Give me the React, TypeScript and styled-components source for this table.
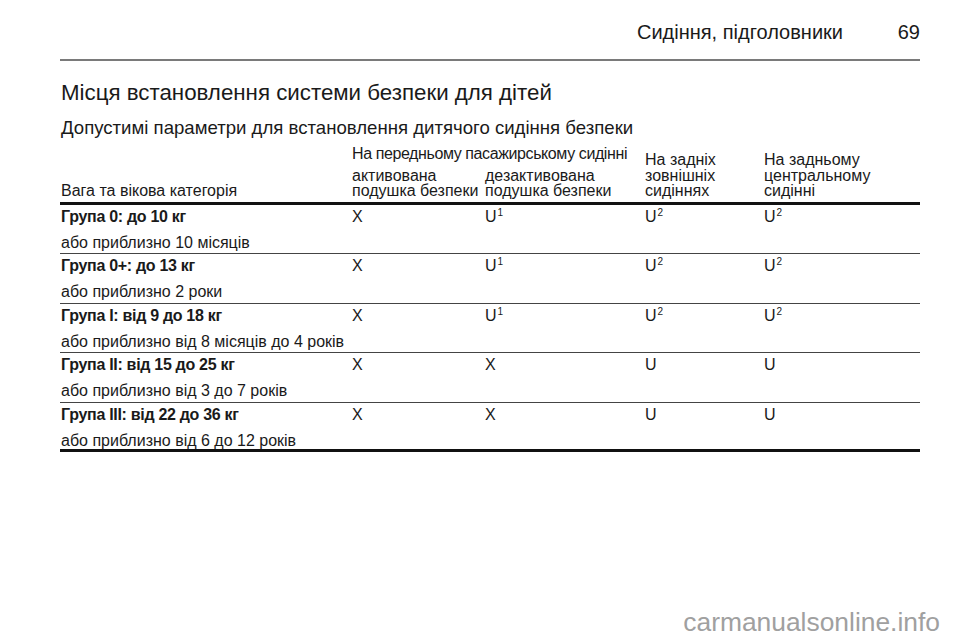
import styled, { createGlobalStyle } from 'styled-components';

const GlobalStyle = createGlobalStyle`
  html, body {
    margin: 0;
    padding: 0;
    background: #ffffff;
  }
  body {
    font-family: "Liberation Sans", Arial, sans-serif;
    color: #1a1a1a;
  }
`;

const Page = styled.div`
  width: 960px;
  height: 642px;
  box-sizing: border-box;
  padding: 0 40px 0 60px;
  position: relative;
  overflow: hidden;
`;

const RunningHead = styled.header`
  display: flex;
  justify-content: flex-end;
  align-items: baseline;
  gap: 50px;
  height: 61px;
  box-sizing: border-box;
  padding-top: 21px;
  border-bottom: 2px solid #7a7a7a;
  font-size: 20px;
`;

const PageNumber = styled.span`
  width: 27px;
  text-align: right;
`;

const Title = styled.h1`
  margin: 18px 0 0 1px;
  font-size: 22.3px;
  font-weight: normal;
  line-height: 28px;
`;

const Subtitle = styled.h2`
  margin: 10px 0 0 1px;
  font-size: 18.6px;
  font-weight: normal;
  line-height: 22px;
`;

const columns = '291px 133px 160px 119px 1fr';

const HeadGrid = styled.div`
  display: grid;
  grid-template-columns: ${columns};
  grid-template-rows: auto auto;
  margin-top: 7px;
  padding: 0 0 3px 1px;
  border-bottom: 3px solid #111;
  font-size: 16px;
  line-height: 15.5px;
`;

const HeadCell = styled.div<{ $col: string; $row: string }>`
  grid-column: ${(p) => p.$col};
  grid-row: ${(p) => p.$row};
  align-self: end;
  white-space: pre-line;
`;

const SpanHead = styled.div`
  grid-column: 2 / 5;
  grid-row: 1;
  padding-bottom: 6px;
  white-space: nowrap;
  letter-spacing: -0.4px;
`;

const Row = styled.div<{ $last?: boolean }>`
  display: grid;
  grid-template-columns: ${columns};
  padding: 1px 0 0 1px;
  height: 49.5px;
  box-sizing: border-box;
  border-bottom: ${(p) => (p.$last ? '3px solid #111' : '1.5px solid #444')};
  font-size: 16px;
  line-height: 22px;
`;

const GroupCell = styled.div`
  display: flex;
  flex-direction: column;
  gap: 4px;
`;

const GroupName = styled.div`
  font-weight: bold;
  letter-spacing: -0.3px;
`;

const Value = styled.div``;

const Sup = styled.sup`
  font-size: 10px;
  vertical-align: 6px;
  line-height: 0;
  margin-left: 1px;
`;

const Watermark = styled.div`
  position: absolute;
  right: 20px;
  bottom: 4px;
  font-size: 26.4px;
  color: #a0a0a0;
`;

type Cell = { v: string; s?: string };

const rows: { name: string; age: string; cells: Cell[] }[] = [
  {
    name: 'Група 0: до 10 кг',
    age: 'або приблизно 10 місяців',
    cells: [{ v: 'X' }, { v: 'U', s: '1' }, { v: 'U', s: '2' }, { v: 'U', s: '2' }],
  },
  {
    name: 'Група 0+: до 13 кг',
    age: 'або приблизно 2 роки',
    cells: [{ v: 'X' }, { v: 'U', s: '1' }, { v: 'U', s: '2' }, { v: 'U', s: '2' }],
  },
  {
    name: 'Група I: від 9 до 18 кг',
    age: 'або приблизно від 8 місяців до 4 років',
    cells: [{ v: 'X' }, { v: 'U', s: '1' }, { v: 'U', s: '2' }, { v: 'U', s: '2' }],
  },
  {
    name: 'Група II: від 15 до 25 кг',
    age: 'або приблизно від 3 до 7 років',
    cells: [{ v: 'X' }, { v: 'X' }, { v: 'U' }, { v: 'U' }],
  },
  {
    name: 'Група III: від 22 до 36 кг',
    age: 'або приблизно від 6 до 12 років',
    cells: [{ v: 'X' }, { v: 'X' }, { v: 'U' }, { v: 'U' }],
  },
];

export default function App() {
  return (
    <>
      <GlobalStyle />
      <Page>
        <RunningHead>
          <span>Сидіння, підголовники</span>
          <PageNumber>69</PageNumber>
        </RunningHead>

        <Title>Місця встановлення системи безпеки для дітей</Title>
        <Subtitle>Допустимі параметри для встановлення дитячого сидіння безпеки</Subtitle>

        <HeadGrid>
          <HeadCell $col="1" $row="1 / 3">Вага та вікова категорія</HeadCell>
          <SpanHead>На передньому пасажирському сидінні</SpanHead>
          <HeadCell $col="2" $row="2">{'активована\nподушка безпеки'}</HeadCell>
          <HeadCell $col="3" $row="2">{'дезактивована\nподушка безпеки'}</HeadCell>
          <HeadCell $col="4" $row="1 / 3">{'На задніх\nзовнішніх\nсидіннях'}</HeadCell>
          <HeadCell $col="5" $row="1 / 3">{'На задньому\nцентральному\nсидінні'}</HeadCell>
        </HeadGrid>

        {rows.map((r, i) => (
          <Row key={r.name} $last={i === rows.length - 1}>
            <GroupCell>
              <GroupName>{r.name}</GroupName>
              <div>{r.age}</div>
            </GroupCell>
            {r.cells.map((c, j) => (
              <Value key={j}>
                {c.v}
                {c.s && <Sup>{c.s}</Sup>}
              </Value>
            ))}
          </Row>
        ))}

        <Watermark>carmanualsonline.info</Watermark>
      </Page>
    </>
  );
}
